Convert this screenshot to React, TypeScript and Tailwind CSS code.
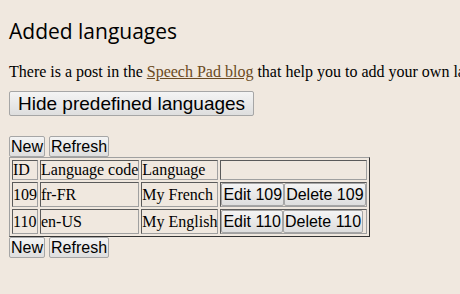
import type { ReactNode } from 'react';

type Lang = { id: number; code: string; name: string };

const languages: Lang[] = [
  { id: 109, code: 'fr-FR', name: 'My French' },
  { id: 110, code: 'en-US', name: 'My English' },
];

function Btn({ children, className = '' }: { children: ReactNode; className?: string }) {
  return (
    <button
      className={`rounded-[2px] border border-[#a6a6a6] bg-gradient-to-b from-[#f4f4f4] to-[#dedede] px-[1px] leading-[19px] text-black font-['Liberation_Sans',Arial,sans-serif] ${className}`}
    >
      {children}
    </button>
  );
}

function Cell({ children, className = '' }: { children?: ReactNode; className?: string }) {
  return (
    <td className={`border border-t-[#5a5a5a] border-l-[#5a5a5a] border-r-[#a0a0a0] border-b-[#a0a0a0] p-0 align-middle ${className}`}>
      {children}
    </td>
  );
}

export default function App() {
  return (
    <div className="min-h-[294px] w-[460px] overflow-hidden bg-[#f0e8df] px-[9px] font-['Liberation_Serif','Times_New_Roman',serif] text-[16px] text-black">
      <h2 className="pt-[17px] font-['Open_Sans',sans-serif] text-[21px] leading-[28px] whitespace-nowrap">
        Added languages
      </h2>
      <p className="mt-[18px] whitespace-nowrap leading-[18px]">
        There is a post in the{' '}
        <a href="#" className="text-[#6b4a22] underline">Speech Pad blog</a>{' '}
        that help you to add your own language
      </p>
      <div className="mt-[10px]">
        <Btn className="px-[8px] text-[19px] leading-[23px]">Hide predefined languages</Btn>
      </div>

      <div className="mt-[19px] flex gap-[4px]">
        <Btn className="text-[16px]">New</Btn>
        <Btn className="text-[16px]">Refresh</Btn>
      </div>
      <table className="border-separate border-spacing-[2px] border border-t-[#a0a0a0] border-l-[#a0a0a0] border-r-[#333] border-b-[#333] leading-[18px]">
        <tbody>
          <tr>
            <Cell>ID</Cell>
            <Cell>Language code</Cell>
            <Cell>Language</Cell>
            <Cell />
          </tr>
          {languages.map((l) => (
            <tr key={l.id}>
              <Cell>{l.id}</Cell>
              <Cell>{l.code}</Cell>
              <Cell>{l.name}</Cell>
              <Cell className="whitespace-nowrap">
                <Btn className="text-[16px] leading-[21px]">Edit {l.id}</Btn>
                <Btn className="text-[16px] leading-[21px]">Delete {l.id}</Btn>
              </Cell>
            </tr>
          ))}
        </tbody>
      </table>
      <div className="flex gap-[4px]">
        <Btn className="text-[16px]">New</Btn>
        <Btn className="text-[16px]">Refresh</Btn>
      </div>
    </div>
  );
}
